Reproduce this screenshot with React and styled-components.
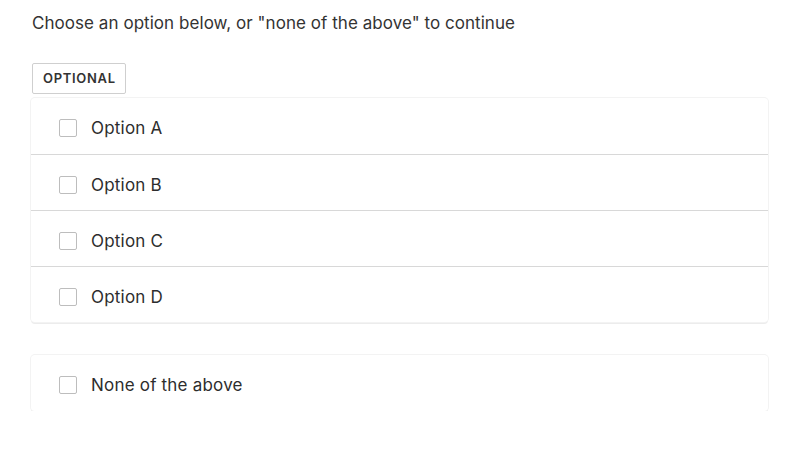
import React from "react";
import styled, { createGlobalStyle } from "styled-components";

const Global = createGlobalStyle`
  html, body { margin: 0; padding: 0; background: #fff; }
  body { font-family: Inter, "Noto Sans", sans-serif; color: #2d2d2d; }
`;

const Page = styled.div`
  padding: 12px 32px 0 31px;
  width: 800px;
  box-sizing: border-box;
`;

const Prompt = styled.p`
  margin: 0 0 0 1px;
  font-size: 17px;
  line-height: 22px;
  letter-spacing: 0.05px;
  color: #333;
`;

const Badge = styled.span`
  display: inline-block;
  margin: 29px 0 0 1px;
  height: 31px;
  box-sizing: border-box;
  padding: 0 9px 0 10px;
  border: 1px solid #cfcfcf;
  border-radius: 2px;
  font-size: 13px;
  font-weight: 600;
  letter-spacing: 0.7px;
  line-height: 29px;
  color: #333;
`;

const Card = styled.div`
  margin-top: ${(p) => p.$top}px;
  border-radius: 4px;
  background: #fff;
  box-shadow: 0 0 0 1px #f3f3f3, 0 2px 0 #ececec;
`;

const Row = styled.label`
  display: flex;
  align-items: center;
  gap: 14px;
  height: 56px;
  padding: 4px 0 0 28px;
  box-sizing: border-box;
  border-top: ${(p) => (p.$first ? "none" : "1px solid #d8d8d8")};
  font-size: 17px;
  letter-spacing: 0.2px;
  color: #2d2d2d;
  cursor: pointer;
`;

const Box = styled.span`
  width: 18px;
  height: 18px;
  box-sizing: border-box;
  border: 1px solid #bdbdbd;
  border-radius: 2px;
  background: #fff;
  flex: none;
`;

const options = ["Option A", "Option B", "Option C", "Option D"];

export default function App() {
  return (
    <>
      <Global />
      <Page>
        <Prompt>Choose an option below, or "none of the above" to continue</Prompt>
        <Badge>OPTIONAL</Badge>
        <Card $top={4}>
          {options.map((o, i) => (
            <Row key={o} $first={i === 0}>
              <Box />
              {o}
            </Row>
          ))}
        </Card>
        <Card $top={33}>
          <Row $first>
            <Box />
            None of the above
          </Row>
        </Card>
      </Page>
    </>
  );
}
